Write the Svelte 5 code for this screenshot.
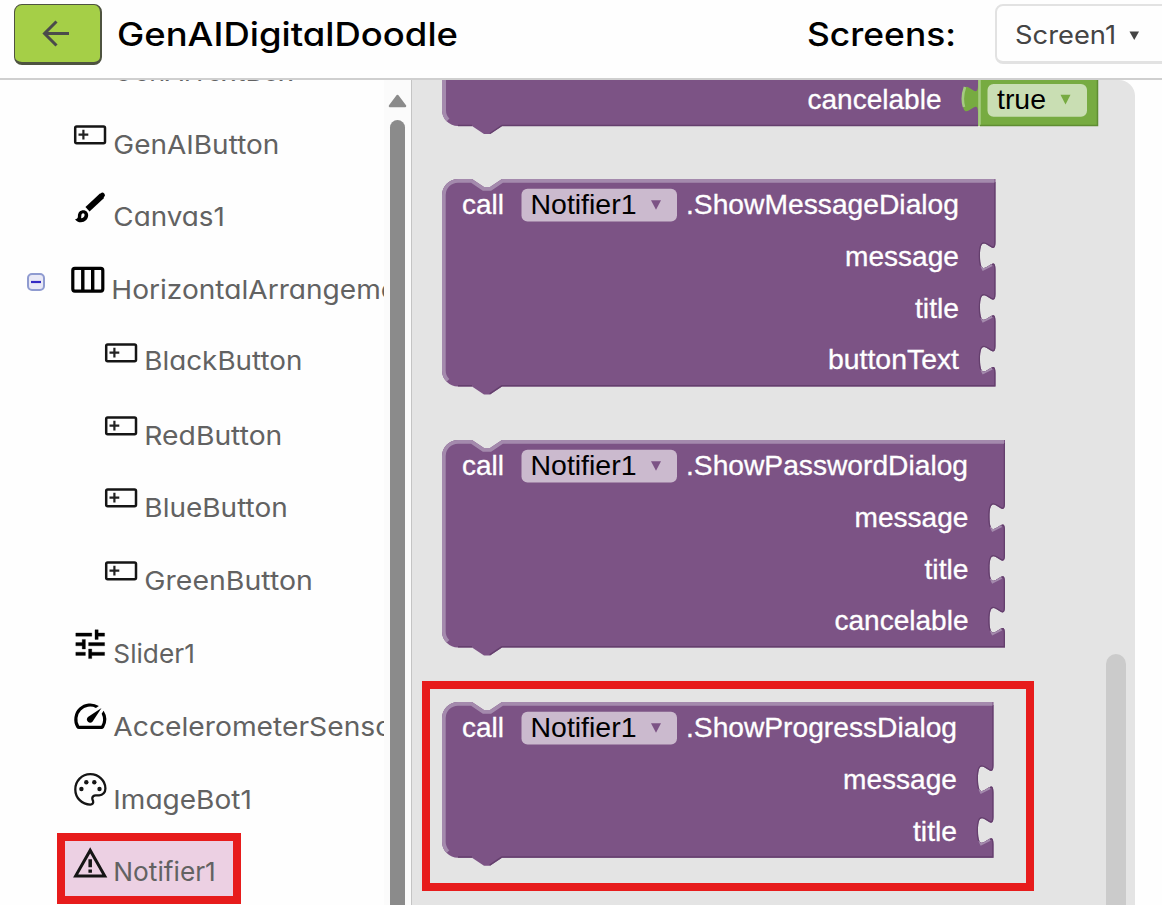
<script>
  const rows = [
    { label: 'GenAITextBox', icon: 'button', w: 180 },
    { label: 'GenAIButton', icon: 'button', w: 166 },
    { label: 'Canvas1', icon: 'brush', w: 111.5 },
    { label: 'HorizontalArrangement1', icon: 'columns', w: 323, open: true, shift: -2 },
    { label: 'BlackButton', icon: 'button', w: 158, nested: true, lift: -1.5 },
    { label: 'RedButton', icon: 'button', w: 138, nested: true },
    { label: 'BlueButton', icon: 'button', w: 143.5, nested: true },
    { label: 'GreenButton', icon: 'button', w: 168.5, nested: true },
    { label: 'Slider1', icon: 'tune', w: 81.5 },
    { label: 'AccelerometerSensor1', icon: 'speed', w: 301 },
    { label: 'ImageBot1', icon: 'palette', w: 138.5 },
    { label: 'Notifier1', icon: 'warning', w: 102.5 }
  ];
  rows[11].selected = true;

  const blocks = [
    { method: '.ShowMessageDialog', w: 553.5, mw: 273, args: [['message', 114], ['title', 44], ['buttonText', 131]] },
    { method: '.ShowPasswordDialog', w: 563, mw: 282, args: [['message', 114], ['title', 44], ['cancelable', 134]] },
    { method: '.ShowProgressDialog', w: 551.5, mw: 271, args: [['message', 114], ['title', 44]] }
  ];

  const ROW = 51.75;
  const heightOf = (b) => ROW * (b.args.length + 1) + 0.4;
  const socket = 'c0,19 -15.5,-15 -15.5,14 s15.5,-5 15.5,14';

  function outline(b) {
    const h = heightOf(b);
    let d = `M0,16 A16,16 0 0 1 16,0 H30 L42,8 H48 L60,0 H${b.w}`;
    b.args.forEach((_, i) => {
      d += ` V${ROW * (i + 1) + 11} ${socket}`;
    });
    return d + ` V${h} H60 L48,${h + 8} H42 L30,${h} H16 A16,16 0 0 1 0,${h - 16} Z`;
  }
  function light(b) {
    const h = heightOf(b);
    return `M4.7,${h - 4.7} A16,16 0 0 1 0,${h - 16} V16 A16,16 0 0 1 16,0 H30 L42,8 H48 L60,0 H${b.w - 1}`;
  }
  function dark(b) {
    const h = heightOf(b);
    let d = `M${b.w},3`;
    b.args.forEach((_, i) => {
      d += ` V${ROW * (i + 1) + 11} ${socket}`;
    });
    return d + ` V${h} H60 L48,${h + 8} M30,${h} H16`;
  }
</script>

{#snippet glyph(name)}
  {#if name === 'button'}
    <svg class="icon" viewBox="0 0 38 38" width="38" height="38">
      <rect x="4.2" y="11.4" width="29.8" height="16.8" rx="1.5" fill="none" stroke="#151515" stroke-width="2.5" />
      <path d="M7.500 19.600h9.800M12.400 14.700v9.800" stroke="#222" stroke-width="2.200" />
    </svg>
  {:else if name === 'brush'}
    <svg class="icon" viewBox="0 0 38 38" width="38" height="38">
      <path d="M16.500 22.200 31 8.700" stroke="#000" stroke-width="6" />
      <path d="M30.200 9.300 31.400 8.200" stroke="#000" stroke-width="5" stroke-linecap="round" />
      <path fill="#000" fill-rule="evenodd" d="M4 32.200c2.200-.2 2.900-1.200 2.900-3 0-4 2.400-6 5.400-6 2.900 0 4.900 2.300 4.900 4.900 0 4.300-3.500 7.200-7.200 7.200-2.700 0-4.700-1.200-6-3.100zM10 31.300c2-.2 3.600-1.500 3.600-3.300 0-1-.6-1.700-1.400-1.700-1.300 0-1.900 1.200-1.900 2.800 0 .8 0 1.500-.3 2.200z" />
    </svg>
  {:else if name === 'columns'}
    <svg class="icon" viewBox="0 0 38 38" width="38" height="38">
      <rect x="3.800" y="8.400" width="30" height="22.700" rx="2" fill="none" stroke="#000" stroke-width="3.200" />
      <path d="M13.800 8.500v22.500M23.700 8.500v22.500" stroke="#000" stroke-width="3.400" />
    </svg>
  {:else if name === 'tune'}
    <svg class="icon" style="margin-top:7.800px" viewBox="0 0 24 24" width="38.400" height="38.400">
      <path d="M3 17v2h6v-2H3zM3 5v2h10V5H3zm10 16v-2h8v-2h-8v-2h-2v6h2zM7 9v2H3v2h4v2h2V9H7zm14 4v-2H11v2h10zm-6-4h2V7h4V5h-4V3h-2v6z" stroke="#000" stroke-width=".2" />
    </svg>
  {:else if name === 'speed'}
    <svg class="icon" style="margin-top:7px" viewBox="0 0 24 24" width="38.400" height="38.400">
      <path d="m20.380 8.570-1.230 1.850a8 8 0 0 1-.22 7.580H5.070A8 8 0 0 1 15.580 6.850l1.850-1.230A10 10 0 0 0 3.350 19a2 2 0 0 0 1.720 1h13.850a2 2 0 0 0 1.740-1 10 10 0 0 0-.27-10.440zm-9.790 6.840a2 2 0 0 0 2.830 0l5.660-8.490-8.490 5.660a2 2 0 0 0 0 2.830z" />
    </svg>
  {:else if name === 'palette'}
    <svg class="icon" viewBox="0 0 38 38" width="38" height="38">
      <path fill="none" stroke="#151515" stroke-width="2.300" d="M19.300 4.200c-8.500 0-15 6.700-15 15.200 0 8.400 6.700 15.200 15 15.200 2.200 0 3.300-1.600 2.800-3.400-.4-1.200-1-2-.8-3.200.3-1.800 1.600-2.600 3.300-2.600h3.500c3.800 0 6.300-3.200 6.300-7 0-8-6.900-14.200-15.100-14.200z" />
      <g fill="#151515"><circle cx="10.400" cy="19" r="2.200" /><circle cx="15.300" cy="12.200" r="2.200" /><circle cx="23.300" cy="12.200" r="2.200" /><circle cx="28.500" cy="19" r="2.200" /></g>
    </svg>
  {:else}
    <svg class="icon" style="margin-top:8.700px" viewBox="0 0 24 24" width="38.400" height="38.400">
      <path fill="#151515" d="M12 5.990 19.530 19H4.470L12 5.990M12 2 1.300 21h21.400L12 2zm1.100 14h-2.200v2h2.200v-2zm0-6.500h-2.200v5h2.200v-5z" />
    </svg>
  {/if}
{/snippet}

{#snippet toggleArrow(x, y, color)}
  <path d="M{x},{y}h10l-5,9.600z" fill={color} />
{/snippet}

<div class="app">
  <header>
    <button class="back" aria-label="Back">
      <svg width="27" height="27" viewBox="0 0 27 27" fill="none" stroke="#4b4b4b" stroke-width="3">
        <path d="M27 13.500H2M14.500 1.500 2.500 13.500l12 12" />
      </svg>
    </button>
    <svg class="title" width="342" height="60"><text x="0" y="45.500" textLength="341" lengthAdjust="spacingAndGlyphs">GenAIDigitalDoodle</text></svg>
    <svg class="title screens" width="150" height="60"><text x="0" y="45.500" textLength="149" lengthAdjust="spacingAndGlyphs">Screens:</text></svg>
    <div class="select">
      <svg width="140" height="56">
        <text x="18" y="37.500" textLength="101" lengthAdjust="spacingAndGlyphs">Screen1</text>
        <path d="M132.500 25.500h9.500l-4.750 8.500z" fill="#444" />
      </svg>
    </div>
  </header>

  <main>
    <div class="tree">
      <div class="list">
        {#each rows as r}
          <div class="row" class:nested={r.nested}>
            {#if r.selected}<div class="mark picked"></div>{/if}
            {#if r.open}
              <svg class="toggle" width="18" height="18" viewBox="0 0 18 18">
                <rect x="1" y="1" width="16" height="16" rx="4" fill="#e9e9f6" stroke="#8f9bd0" stroke-width="2" />
                <path d="M4 9h10" stroke="#3429c4" stroke-width="2.200" />
              </svg>
            {/if}
            <div class="pic" style="margin-left:{r.shift ?? 0}px">{@render glyph(r.icon)}</div>
            <svg class="label" width={r.w} height="72">
              <text x="-0.7" y={45.9 + (r.lift ?? 0)} textLength={r.w} lengthAdjust="spacingAndGlyphs">{r.label}</text>
            </svg>
          </div>
        {/each}
      </div>
    </div>

    <div class="scroll">
      <svg width="19" height="14" viewBox="0 0 19 14"><path d="M9.500 2 2 12h15z" fill="#8b8b8b" stroke="#8b8b8b" stroke-width="2.500" stroke-linejoin="round" /></svg>
      <div class="thumb"></div>
    </div>

    <div class="flyout">
      <div class="blocks">
        <svg class="block" width="660" height="54.500">
          <path class="body" d="M0,-20 H536 V46 H60 L48,54 H42 L30,46 H16 A16,16 0 0 1 0,30 Z" />
          <path d="M2,-5 V30 A14,14 0 0 0 6,40" class="edge" />
          <path class="shade" d="M16,45.500 H30 M536,45.500 H60 L48,53.500" />
          <text class="arg" x="499.500" y="28.500" text-anchor="end" textLength="134" lengthAdjust="spacingAndGlyphs">cancelable</text>
          <path class="logic" d="M536,-20 H656 V46 H536 V33 c0,-19 -15.500,15 -15.500,-14 s15.500,5 15.500,-14 Z" />
          <path d="M537.500,-5 V46 M522,27 c-1.500,-5 -1.500,-13 1,-20" fill="none" stroke="#a5cb80" stroke-width="2.600" />
          <path d="M538,45.500 H655.500 V-5" fill="none" stroke="#5f8d33" stroke-width="1.500" />
          <rect x="545.500" y="4" width="99.500" height="32.800" rx="6" fill="#c9deb3" />
          <text class="value" x="555" y="28.500" textLength="49" lengthAdjust="spacingAndGlyphs">true</text>
          {@render toggleArrow(618.5, 14.8, '#77ab41')}
        </svg>

        {#each blocks as b, n}
          <svg class="block" width="580" height={heightOf(b) + 9}>
            <clipPath id="shape{n}"><path d={outline(b)} /></clipPath>
            <path class="body" d={outline(b)} />
            <g clip-path="url(#shape{n})">
              <path d={dark(b)} class="shade wide" />
              {#each b.args as _, i}
                <path d="M{b.w - 14},{ROW * (i + 1) + 38} L{b.w - 4},{ROW * (i + 1) + 33}" stroke="#a48aad" stroke-width="5" />
              {/each}
              <path d={light(b)} class="edge wide" />
            </g>
            <text class="arg" x="20" y="35.200" textLength="42" lengthAdjust="spacingAndGlyphs">call</text>
            <rect x="79.500" y="9.800" width="155.500" height="32.800" rx="6" fill="#cbbace" />
            <text class="value" x="88.500" y="35.200" textLength="106" lengthAdjust="spacingAndGlyphs">Notifier1</text>
            {@render toggleArrow(209, 21.2, '#7c5385')}
            <text class="arg" x="244" y="35.200" textLength={b.mw} lengthAdjust="spacingAndGlyphs">{b.method}</text>
            {#each b.args as a, i}
              <text class="arg" x={b.w - 36.5} y={86.8 + ROW * i} text-anchor="end" textLength={a[1]} lengthAdjust="spacingAndGlyphs">{a[0]}</text>
            {/each}
          </svg>
        {/each}
      </div>
      <div class="rail"></div>
      <div class="mark target"></div>
    </div>
  </main>
</div>

<style>
  :global(body) { background: #fff; overflow: hidden; }
  .app { width: 1162px; height: 905px; display: flex; flex-direction: column; overflow: hidden; background: #fefefe; }
  svg { display: block; overflow: visible; flex: none; }
  header { box-sizing: border-box; height: 80px; flex: none; display: flex; align-items: flex-start; border-bottom: 2px solid #cfcfcf; }
  .back { box-sizing: border-box; flex: none; width: 88px; height: 61px; margin: 4px 0 0 14px; padding: 0 5px 1px 0; display: flex; align-items: center; justify-content: center; background: #a5cf47; border: solid #4e5340; border-width: 1.500px 2.500px 3px 1.500px; border-radius: 8px; }
  .title { margin-left: 15px; }
  .title text { font: 500 32.500px Inter, sans-serif; font-feature-settings: "cv11"; fill: #000; }
  .screens { margin-left: 348px; }
  .select { box-sizing: border-box; flex: none; width: 190px; height: 60px; margin: 4px 0 0 38px; border: 2px solid #e2e2e2; border-bottom-width: 3px; border-radius: 8px; }
  .select text { font: 400 25px Inter, sans-serif; font-feature-settings: "cv11"; fill: #444; }
  main { flex: 1; min-height: 0; display: flex; }
  .tree { width: 384px; flex: none; overflow: hidden; }
  .list { margin-top: -45.300px; display: flex; flex-direction: column; }
  .row { position: relative; height: 72.800px; flex: none; display: flex; align-items: flex-start; padding-left: 70.500px; }
  .row.nested { padding-left: 101.500px; }
  .pic { position: relative; width: 43.500px; flex: none; }
  .icon { margin-top: 7px; }
  .label { position: relative; }
  .label text { font: 400 26px Inter, sans-serif; font-feature-settings: "cv11"; fill: #626262; }
  .toggle { margin: 20px 0 0 -44px; padding-right: 26px; }
  .mark { box-sizing: border-box; position: absolute; border: 8.500px solid #e71c1c; }
  .picked { left: 57px; top: -2px; width: 184px; height: 71px; background: #ecd0e3; }
  .target { left: 10px; top: 601px; width: 612px; height: 210px; }
  .scroll { width: 27px; flex: none; background: #fbfbfb; display: flex; flex-direction: column; align-items: center; padding-top: 14px; box-sizing: border-box; }
  .thumb { width: 15.500px; flex: 1; margin-top: 12px; background: #8b8b8b; border-radius: 8px 8px 0 0; }
  .flyout { position: relative; box-sizing: border-box; width: 724px; border-left: 1.500px solid #c4c4c4; border-top-right-radius: 16px; background: #e4e4e4; display: flex; overflow: hidden; }
  .blocks { flex: 1; min-width: 0; padding-left: 30px; display: flex; flex-direction: column; gap: 44.800px; }
  .rail { width: 19.500px; height: 260px; margin: 574px 9.500px 0 0; flex: none; border-radius: 10px 10px 0 0; background: #cbcbcb; }
  .body { fill: #7c5385; }
  .logic { fill: #77ab41; }
  .edge { fill: none; stroke: #a48aad; stroke-width: 4; }
  .edge.wide { stroke-width: 7.400; }
  .shade { fill: none; stroke: #643f6d; stroke-width: 1.400; }
  .shade.wide { stroke-width: 2.600; }
  text { white-space: pre; }
  .arg { font: 28px "Liberation Sans", Arial, sans-serif; fill: #fff; stroke: #fff; stroke-width: .3; }
  .value { font: 28px "Liberation Sans", Arial, sans-serif; fill: #000; }
</style>
